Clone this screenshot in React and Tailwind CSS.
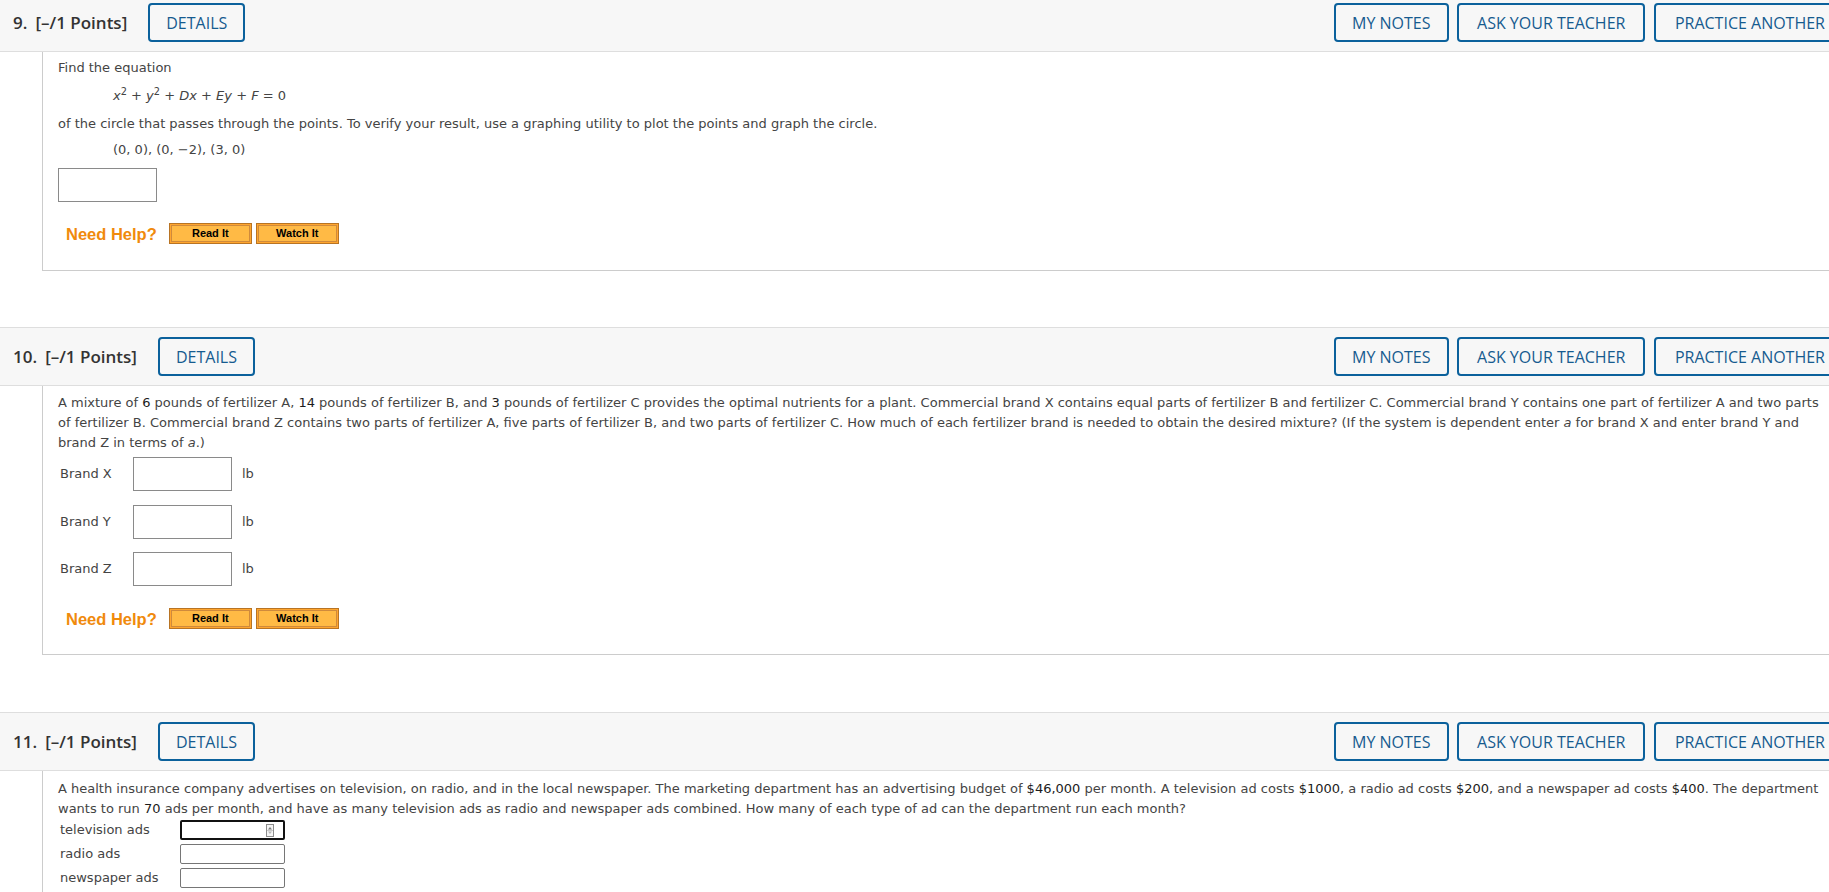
import React from "react";

const body = "font-['DejaVu_Sans',sans-serif] text-[13px] leading-[20px] text-[#444444]";

function N({ children }) {
  return <span className="text-[#1c1c1c]">{children}</span>;
}

function HeadButton({ children, pad }) {
  return (
    <span
      className={
        "flex h-[39px] items-center rounded-[4px] border-2 border-[#0b619c] font-['Open_Sans',sans-serif] text-[16px] text-[#165b8f] " +
        (pad || "px-4")
      }
    >
      {children}
    </span>
  );
}

function Header({ num }) {
  return (
    <div className="flex items-center justify-between border-y border-[#dedede] bg-[#f7f7f7] py-[9px] pl-[13px] pr-[12px]">
      <div className="flex items-center">
        <span className="font-['Open_Sans',sans-serif] text-[17px] font-semibold text-[#333333]">{num}.</span>
        <span className="ml-[8px] font-['Open_Sans',sans-serif] text-[17px] font-semibold text-[#333333]">[–/1 Points]</span>
        <span className="ml-[21px]">
          <HeadButton>DETAILS</HeadButton>
        </span>
      </div>
      <div className="flex items-center gap-[8.5px]">
        <HeadButton pad="px-[16px]">MY NOTES</HeadButton>
        <HeadButton pad="px-[18px]">ASK YOUR TEACHER</HeadButton>
        <HeadButton pad="px-[19px]">PRACTICE ANOTHER</HeadButton>
      </div>
    </div>
  );
}

function HelpButton({ children }) {
  return (
    <span className="flex h-[21px] w-[83px] border border-[#b87424] bg-[#ffa52e] p-px">
      <span className="flex h-full w-full items-center justify-center border border-[#cf8a3c] bg-[#ffba45] font-['Liberation_Sans',Arial,sans-serif] text-[11px] font-bold leading-none text-black">
        {children}
      </span>
    </span>
  );
}

function NeedHelp({ className }) {
  return (
    <div className={"flex h-[21px] items-center " + className}>
      <span className="ml-[8px] font-['Liberation_Sans',Arial,sans-serif] text-[16.5px] font-bold text-[#f08a0c]">Need Help?</span>
      <span className="ml-[12px] flex gap-[4px]">
        <HelpButton>Read It</HelpButton>
        <HelpButton>Watch It</HelpButton>
      </span>
    </div>
  );
}

function Spinner() {
  return (
    <svg width="8" height="13" viewBox="0 0 8 13" className="absolute right-[9px] top-[2px]">
      <rect x="0.5" y="0.5" width="7" height="12" fill="#f4f4f4" stroke="#8c8c8c" />
      <path d="M2 5.5 L4 3 L6 5.5 Z" fill="#7a7a7a" />
      <path d="M2 7.5 L4 10 L6 7.5 Z" fill="#b5b5b5" />
      <line x1="1" y1="6.5" x2="7" y2="6.5" stroke="#c8c8c8" />
    </svg>
  );
}

function Section1() {
  return (
    <div className="mb-[56px]">
      <Header num="9" />
      <div className={"ml-[42px] border-b border-l border-[#cccccc] pb-[26px] pl-[15px] pt-[6px] " + body}>
        <div>Find the equation</div>
        <div className="ml-[55px] mt-[8px]">
          <i>x</i>
          <sup>2</sup> + <i>y</i>
          <sup>2</sup> + <i>Dx</i> + <i>Ey</i> + <i>F</i> = 0
        </div>
        <div className="mt-[8px] whitespace-nowrap">
          of the circle that passes through the points. To verify your result, use a graphing utility to plot the points and graph the circle.
        </div>
        <div className="ml-[55px] mt-[6px]">
          (0, 0), (0, −2), (3, 0)
        </div>
        <div className="mt-[8px] h-[34px] w-[99px] border border-[#8a8a8a] bg-white"></div>
        <NeedHelp className="mt-[21px]" />
      </div>
    </div>
  );
}

function BrandRow({ label }) {
  return (
    <div className="flex h-[34px] items-center">
      <span className="ml-[2px] w-[73px]">{label}</span>
      <span className="h-[34px] w-[99px] border border-[#8a8a8a] bg-white"></span>
      <span className="ml-[10px]">lb</span>
    </div>
  );
}

function Section2() {
  return (
    <div className="mb-[57px]">
      <Header num="10" />
      <div className={"ml-[42px] border-b border-l border-[#cccccc] pb-[25px] pl-[15px] pt-[7px] " + body}>
        <div className="whitespace-nowrap">
          A mixture of <N>6</N> pounds of fertilizer A, <N>14</N> pounds of fertilizer B, and <N>3</N> pounds of fertilizer C provides the optimal nutrients for a plant. Commercial brand X contains equal parts of fertilizer B and fertilizer C. Commercial brand Y contains one part of fertilizer A and two parts
        </div>
        <div className="whitespace-nowrap">
          of fertilizer B. Commercial brand Z contains two parts of fertilizer A, five parts of fertilizer B, and two parts of fertilizer C. How much of each fertilizer brand is needed to obtain the desired mixture? (If the system is dependent enter <i>a</i> for brand X and enter brand Y and
        </div>
        <div className="whitespace-nowrap">
          brand Z in terms of <i>a</i>.)
        </div>
        <div className="mt-[4px] flex flex-col gap-[13.5px]">
          <BrandRow label="Brand X" />
          <BrandRow label="Brand Y" />
          <BrandRow label="Brand Z" />
        </div>
        <NeedHelp className="mt-[22px]" />
      </div>
    </div>
  );
}

function AdRow({ label, focused }) {
  return (
    <div className="flex h-[20px] items-center">
      <span className="ml-[2px] w-[120px]">{label}</span>
      {focused ? (
        <span className="relative h-[20px] w-[105px] rounded-[2px] border-2 border-[#111111] bg-white">
          <Spinner />
        </span>
      ) : (
        <span className="h-[20px] w-[105px] rounded-[2px] border border-[#767676] bg-white"></span>
      )}
    </div>
  );
}

function Section3() {
  return (
    <div>
      <Header num="11" />
      <div className={"ml-[42px] border-l border-[#cccccc] pb-[40px] pl-[15px] pt-[8px] " + body}>
        <div className="whitespace-nowrap">
          A health insurance company advertises on television, on radio, and in the local newspaper. The marketing department has an advertising budget of <N>$46,000</N> per month. A television ad costs <N>$1000</N>, a radio ad costs <N>$200</N>, and a newspaper ad costs <N>$400</N>. The department
        </div>
        <div className="whitespace-nowrap">
          wants to run <N>70</N> ads per month, and have as many television ads as radio and newspaper ads combined. How many of each type of ad can the department run each month?
        </div>
        <div className="mt-[1px] flex flex-col gap-[4px]">
          <AdRow label="television ads" focused />
          <AdRow label="radio ads" />
          <AdRow label="newspaper ads" />
        </div>
      </div>
    </div>
  );
}

export default function App() {
  return (
    <div className="h-screen w-full overflow-hidden bg-white">
      <div className="-mt-[7px] w-[1858px]">
        <Section1 />
        <Section2 />
        <Section3 />
      </div>
    </div>
  );
}
